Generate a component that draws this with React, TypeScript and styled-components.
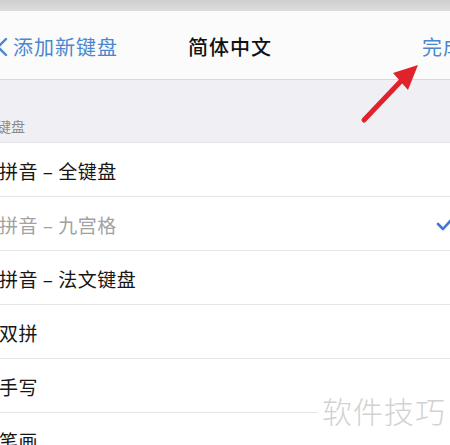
import React from "react";
import styled, { createGlobalStyle } from "styled-components";

const Global = createGlobalStyle`
  html, body { margin: 0; padding: 0; background: #ffffff; }
  body { width: 450px; height: 445px; overflow: hidden; font-family: "Noto Sans CJK SC", "Noto Sans", sans-serif; }
`;

const Screen = styled.div`
  position: relative;
  width: 450px;
  height: 445px;
  overflow: hidden;
  background: #ffffff;
  display: flex;
  flex-direction: column;
`;

const TopStrip = styled.div`
  height: 11px;
  background: linear-gradient(#cfcfcf, #dcdcdc);
  flex-shrink: 0;
`;

const NavBar = styled.div`
  height: 69px;
  flex-shrink: 0;
  background: #fbfbfb;
  border-bottom: 1px solid #d9d9de;
  display: flex;
  align-items: center;
  box-sizing: border-box;
  padding-top: 3px;
`;

const BackButton = styled.div`
  display: flex;
  align-items: center;
  gap: 5px;
  margin-left: -4px;
  color: #4b86cf;
  font-size: 20px;
  letter-spacing: 1px;
`;

const Title = styled.div`
  margin-left: 70px;
  font-size: 20px;
  font-weight: 500;
  color: #111;
  letter-spacing: 1px;
`;

const Done = styled.div`
  margin-left: auto;
  margin-right: -14px;
  color: #4b86cf;
  font-size: 20px;
  letter-spacing: 1px;
`;

const SectionHeader = styled.div`
  height: 63px;
  flex-shrink: 0;
  background: #f0f0f4;
  display: flex;
  align-items: flex-end;
  padding-bottom: 6px;
  box-sizing: border-box;
  border-bottom: 1px solid #e4e4e8;
  font-size: 14px;
  color: #8a8a8e;
`;

const HeaderLabel = styled.span`
  margin-left: -3px;
`;

const List = styled.div`
  display: flex;
  flex-direction: column;
  background: #fff;
`;

const Row = styled.div<{ $muted?: boolean }>`
  height: 54px;
  flex-shrink: 0;
  box-sizing: border-box;
  border-bottom: 1px solid #e6e6e6;
  display: flex;
  align-items: center;
  padding-top: 1px;
  font-size: 19px;
  letter-spacing: 0.5px;
  color: ${(p) => (p.$muted ? "#a2a2a2" : "#161616")};
`;

const RowText = styled.span`
  margin-left: -1px;
`;

const Check = styled.svg`
  margin-left: auto;
  margin-right: -4px;
`;

const Watermark = styled.div`
  position: absolute;
  left: 318px;
  top: 388px;
  padding: 0 4px;
  background: #fff;
  font-size: 30px;
  font-weight: 300;
  color: #d2d2d2;
  letter-spacing: 1px;
`;

const ArrowOverlay = styled.svg`
  position: absolute;
  left: 0;
  top: 0;
  pointer-events: none;
`;

const rows = [
  { label: "拼音 – 全键盘" },
  { label: "拼音 – 九宫格", muted: true, checked: true },
  { label: "拼音 – 法文键盘" },
  { label: "双拼" },
  { label: "手写" },
  { label: "笔画" },
];

export default function App() {
  return (
    <>
      <Global />
      <Screen>
        <TopStrip />
        <NavBar>
          <BackButton>
            <svg width="12" height="20" viewBox="0 0 12 20">
              <path d="M10 2 L2 10 L10 18" fill="none" stroke="#4b86cf" strokeWidth="2.4" strokeLinecap="round" strokeLinejoin="round" />
            </svg>
            <span>添加新键盘</span>
          </BackButton>
          <Title>简体中文</Title>
          <Done>完成</Done>
        </NavBar>
        <SectionHeader>
          <HeaderLabel>键盘</HeaderLabel>
        </SectionHeader>
        <List>
          {rows.map((r) => (
            <Row key={r.label} $muted={r.muted}>
              <RowText>{r.label}</RowText>
              {r.checked && (
                <Check width="18" height="14" viewBox="0 0 18 14">
                  <path d="M2 7 L7 12 L16 2" fill="none" stroke="#3f78d4" strokeWidth="2.6" strokeLinecap="round" strokeLinejoin="round" />
                </Check>
              )}
            </Row>
          ))}
        </List>
        <Watermark>软件技巧</Watermark>
        <ArrowOverlay width="450" height="445" viewBox="0 0 450 445">
          <line x1="364" y1="120" x2="402" y2="80" stroke="#e0222c" strokeWidth="5" strokeLinecap="round" />
          <polygon points="418,65 393,73 408,90" fill="#e0222c" />
        </ArrowOverlay>
      </Screen>
    </>
  );
}
